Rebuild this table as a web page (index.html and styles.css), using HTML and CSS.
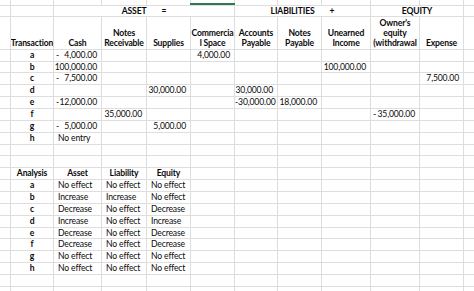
FILE: index.html
```html
<!DOCTYPE html>
<html>
<head>
<meta charset="utf-8">
<link rel="stylesheet" href="styles.css">
</head>
<body>
<div class="sheet">
  <div class="sel"></div>

  <div class="row r0">
    <div class="c c0"></div><div class="c"></div><div class="c"></div><div class="c"></div><div class="c"></div><div class="c"></div><div class="c"></div><div class="c"></div><div class="c"></div><div class="c"></div><div class="c"></div><div class="c"></div>
  </div>

  <div class="row r1">
    <div class="c c0"></div><div class="c"></div>
    <div class="c grp s4"><span>ASSET</span><span>=</span></div>
    <div class="c grp s3"><span>LIABILITIES</span><span>+</span></div>
    <div class="c grp s2"><span>EQUITY</span></div>
    <div class="c"></div>
  </div>

  <div class="row r2">
    <div class="c c0"></div>
    <div class="c h">Transaction</div>
    <div class="c h">Cash</div>
    <div class="c h">Notes<br>Receivable</div>
    <div class="c h">Supplies</div>
    <div class="c h">Commercia<br>l Space</div>
    <div class="c h">Accounts<br>Payable</div>
    <div class="c h">Notes<br>Payable</div>
    <div class="c h">Unearned<br>Income</div>
    <div class="c h">Owner's<br>equity<br>(withdrawal</div>
    <div class="c h">Expense</div>
    <div class="c"></div>
  </div>

  <div class="row">
    <div class="c c0"></div><div class="c k">a</div><div class="c ng"><span>-</span><span>4,000.00</span></div><div class="c"></div><div class="c"></div><div class="c n">4,000.00</div><div class="c"></div><div class="c"></div><div class="c"></div><div class="c"></div><div class="c"></div><div class="c"></div>
  </div>
  <div class="row">
    <div class="c c0"></div><div class="c k">b</div><div class="c n">100,000.00</div><div class="c"></div><div class="c"></div><div class="c"></div><div class="c"></div><div class="c"></div><div class="c n">100,000.00</div><div class="c"></div><div class="c"></div><div class="c"></div>
  </div>
  <div class="row">
    <div class="c c0"></div><div class="c k">c</div><div class="c ng"><span>-</span><span>7,500.00</span></div><div class="c"></div><div class="c"></div><div class="c"></div><div class="c"></div><div class="c"></div><div class="c"></div><div class="c"></div><div class="c n">7,500.00</div><div class="c"></div>
  </div>
  <div class="row">
    <div class="c c0"></div><div class="c k">d</div><div class="c"></div><div class="c"></div><div class="c n">30,000.00</div><div class="c"></div><div class="c n">30,000.00</div><div class="c"></div><div class="c"></div><div class="c"></div><div class="c"></div><div class="c"></div>
  </div>
  <div class="row">
    <div class="c c0"></div><div class="c k">e</div><div class="c ng"><span>-</span><span>12,000.00</span></div><div class="c"></div><div class="c"></div><div class="c"></div><div class="c n">-30,000.00</div><div class="c n">18,000.00</div><div class="c"></div><div class="c"></div><div class="c"></div><div class="c"></div>
  </div>
  <div class="row">
    <div class="c c0"></div><div class="c k">f</div><div class="c"></div><div class="c n">35,000.00</div><div class="c"></div><div class="c"></div><div class="c"></div><div class="c"></div><div class="c"></div><div class="c ng"><span>-</span><span>35,000.00</span></div><div class="c"></div><div class="c"></div>
  </div>
  <div class="row">
    <div class="c c0"></div><div class="c k">g</div><div class="c ng"><span>-</span><span>5,000.00</span></div><div class="c"></div><div class="c n">5,000.00</div><div class="c"></div><div class="c"></div><div class="c"></div><div class="c"></div><div class="c"></div><div class="c"></div><div class="c"></div>
  </div>
  <div class="row">
    <div class="c c0"></div><div class="c k">h</div><div class="c t">No entry</div><div class="c"></div><div class="c"></div><div class="c"></div><div class="c"></div><div class="c"></div><div class="c"></div><div class="c"></div><div class="c"></div><div class="c"></div>
  </div>
  <div class="row">
    <div class="c c0"></div><div class="c"></div><div class="c"></div><div class="c"></div><div class="c"></div><div class="c"></div><div class="c"></div><div class="c"></div><div class="c"></div><div class="c"></div><div class="c"></div><div class="c"></div>
  </div>
  <div class="row">
    <div class="c c0"></div><div class="c"></div><div class="c"></div><div class="c"></div><div class="c"></div><div class="c"></div><div class="c"></div><div class="c"></div><div class="c"></div><div class="c"></div><div class="c"></div><div class="c"></div>
  </div>

  <div class="row">
    <div class="c c0"></div><div class="c k">Analysis</div><div class="c k">Asset</div><div class="c k">Liability</div><div class="c k">Equity</div><div class="c"></div><div class="c"></div><div class="c"></div><div class="c"></div><div class="c"></div><div class="c"></div><div class="c"></div>
  </div>
  <div class="row">
    <div class="c c0"></div><div class="c k">a</div><div class="c t">No effect</div><div class="c t">No effect</div><div class="c t">No effect</div><div class="c"></div><div class="c"></div><div class="c"></div><div class="c"></div><div class="c"></div><div class="c"></div><div class="c"></div>
  </div>
  <div class="row">
    <div class="c c0"></div><div class="c k">b</div><div class="c t">Increase</div><div class="c t">Increase</div><div class="c t">No effect</div><div class="c"></div><div class="c"></div><div class="c"></div><div class="c"></div><div class="c"></div><div class="c"></div><div class="c"></div>
  </div>
  <div class="row">
    <div class="c c0"></div><div class="c k">c</div><div class="c t">Decrease</div><div class="c t">No effect</div><div class="c t">Decrease</div><div class="c"></div><div class="c"></div><div class="c"></div><div class="c"></div><div class="c"></div><div class="c"></div><div class="c"></div>
  </div>
  <div class="row">
    <div class="c c0"></div><div class="c k">d</div><div class="c t">Increase</div><div class="c t">No effect</div><div class="c t">Increase</div><div class="c"></div><div class="c"></div><div class="c"></div><div class="c"></div><div class="c"></div><div class="c"></div><div class="c"></div>
  </div>
  <div class="row">
    <div class="c c0"></div><div class="c k">e</div><div class="c t">Decrease</div><div class="c t">No effect</div><div class="c t">Decrease</div><div class="c"></div><div class="c"></div><div class="c"></div><div class="c"></div><div class="c"></div><div class="c"></div><div class="c"></div>
  </div>
  <div class="row">
    <div class="c c0"></div><div class="c k">f</div><div class="c t">Decrease</div><div class="c t">No effect</div><div class="c t">Decrease</div><div class="c"></div><div class="c"></div><div class="c"></div><div class="c"></div><div class="c"></div><div class="c"></div><div class="c"></div>
  </div>
  <div class="row">
    <div class="c c0"></div><div class="c k">g</div><div class="c t">No effect</div><div class="c t">No effect</div><div class="c t">No effect</div><div class="c"></div><div class="c"></div><div class="c"></div><div class="c"></div><div class="c"></div><div class="c"></div><div class="c"></div>
  </div>
  <div class="row">
    <div class="c c0"></div><div class="c k">h</div><div class="c t">No effect</div><div class="c t">No effect</div><div class="c t">No effect</div><div class="c"></div><div class="c"></div><div class="c"></div><div class="c"></div><div class="c"></div><div class="c"></div><div class="c"></div>
  </div>
  <div class="row">
    <div class="c c0"></div><div class="c"></div><div class="c"></div><div class="c"></div><div class="c"></div><div class="c"></div><div class="c"></div><div class="c"></div><div class="c"></div><div class="c"></div><div class="c"></div><div class="c"></div>
  </div>
  <div class="row">
    <div class="c c0"></div><div class="c"></div><div class="c"></div><div class="c"></div><div class="c"></div><div class="c"></div><div class="c"></div><div class="c"></div><div class="c"></div><div class="c"></div><div class="c"></div><div class="c"></div>
  </div>
</div>
</body>
</html>
```

FILE: styles.css
```css
html, body {
  margin: 0;
  padding: 0;
  background: #ffffff;
  overflow: hidden;
}

.sheet {
  position: relative;
  width: 474px;
  height: 291px;
  overflow: hidden;
  font-family: Lato, "Open Sans", sans-serif;
  font-size: 8.6px;
  letter-spacing: -0.15px;
  color: #0a0a0a;
}

.row {
  display: grid;
  grid-template-columns: 10px 43px 48px 45px 44px 44px 43px 44px 49px 49px 44px 1fr;
  height: 11.86px;
  line-height: 11.86px;
}

.r0 { height: 4.7px; }
.r1 { height: 11.3px; line-height: 11.3px; }
.r2 { height: 32.7px; }

.c {
  box-sizing: border-box;
  border-left: 1px solid #dedede;
  border-top: 1px solid #dedede;
  overflow: hidden;
  white-space: nowrap;
  min-width: 0;
}

.c0 { border-left: none; }
.r0 .c { border-top: none; }

.s4 { grid-column: span 4; }
.s3 { grid-column: span 3; }
.s2 { grid-column: span 2; }

.grp {
  display: flex;
  justify-content: center;
  gap: 15px;
  font-weight: 700;
}

.h {
  display: flex;
  flex-direction: column;
  justify-content: flex-end;
  align-items: center;
  text-align: center;
  font-weight: 700;
  line-height: 10px;
  padding-bottom: 1px;
}

.k {
  text-align: center;
  font-weight: 700;
}

.n {
  text-align: right;
  padding-right: 4px;
}

.t {
  padding-left: 4px;
}

.ng {
  display: flex;
  justify-content: space-between;
  padding-left: 2px;
  padding-right: 4px;
}

.sel {
  position: absolute;
  top: 3px;
  left: 190px;
  width: 45px;
  height: 2px;
  background: #2d7a4f;
  z-index: 2;
}
```
